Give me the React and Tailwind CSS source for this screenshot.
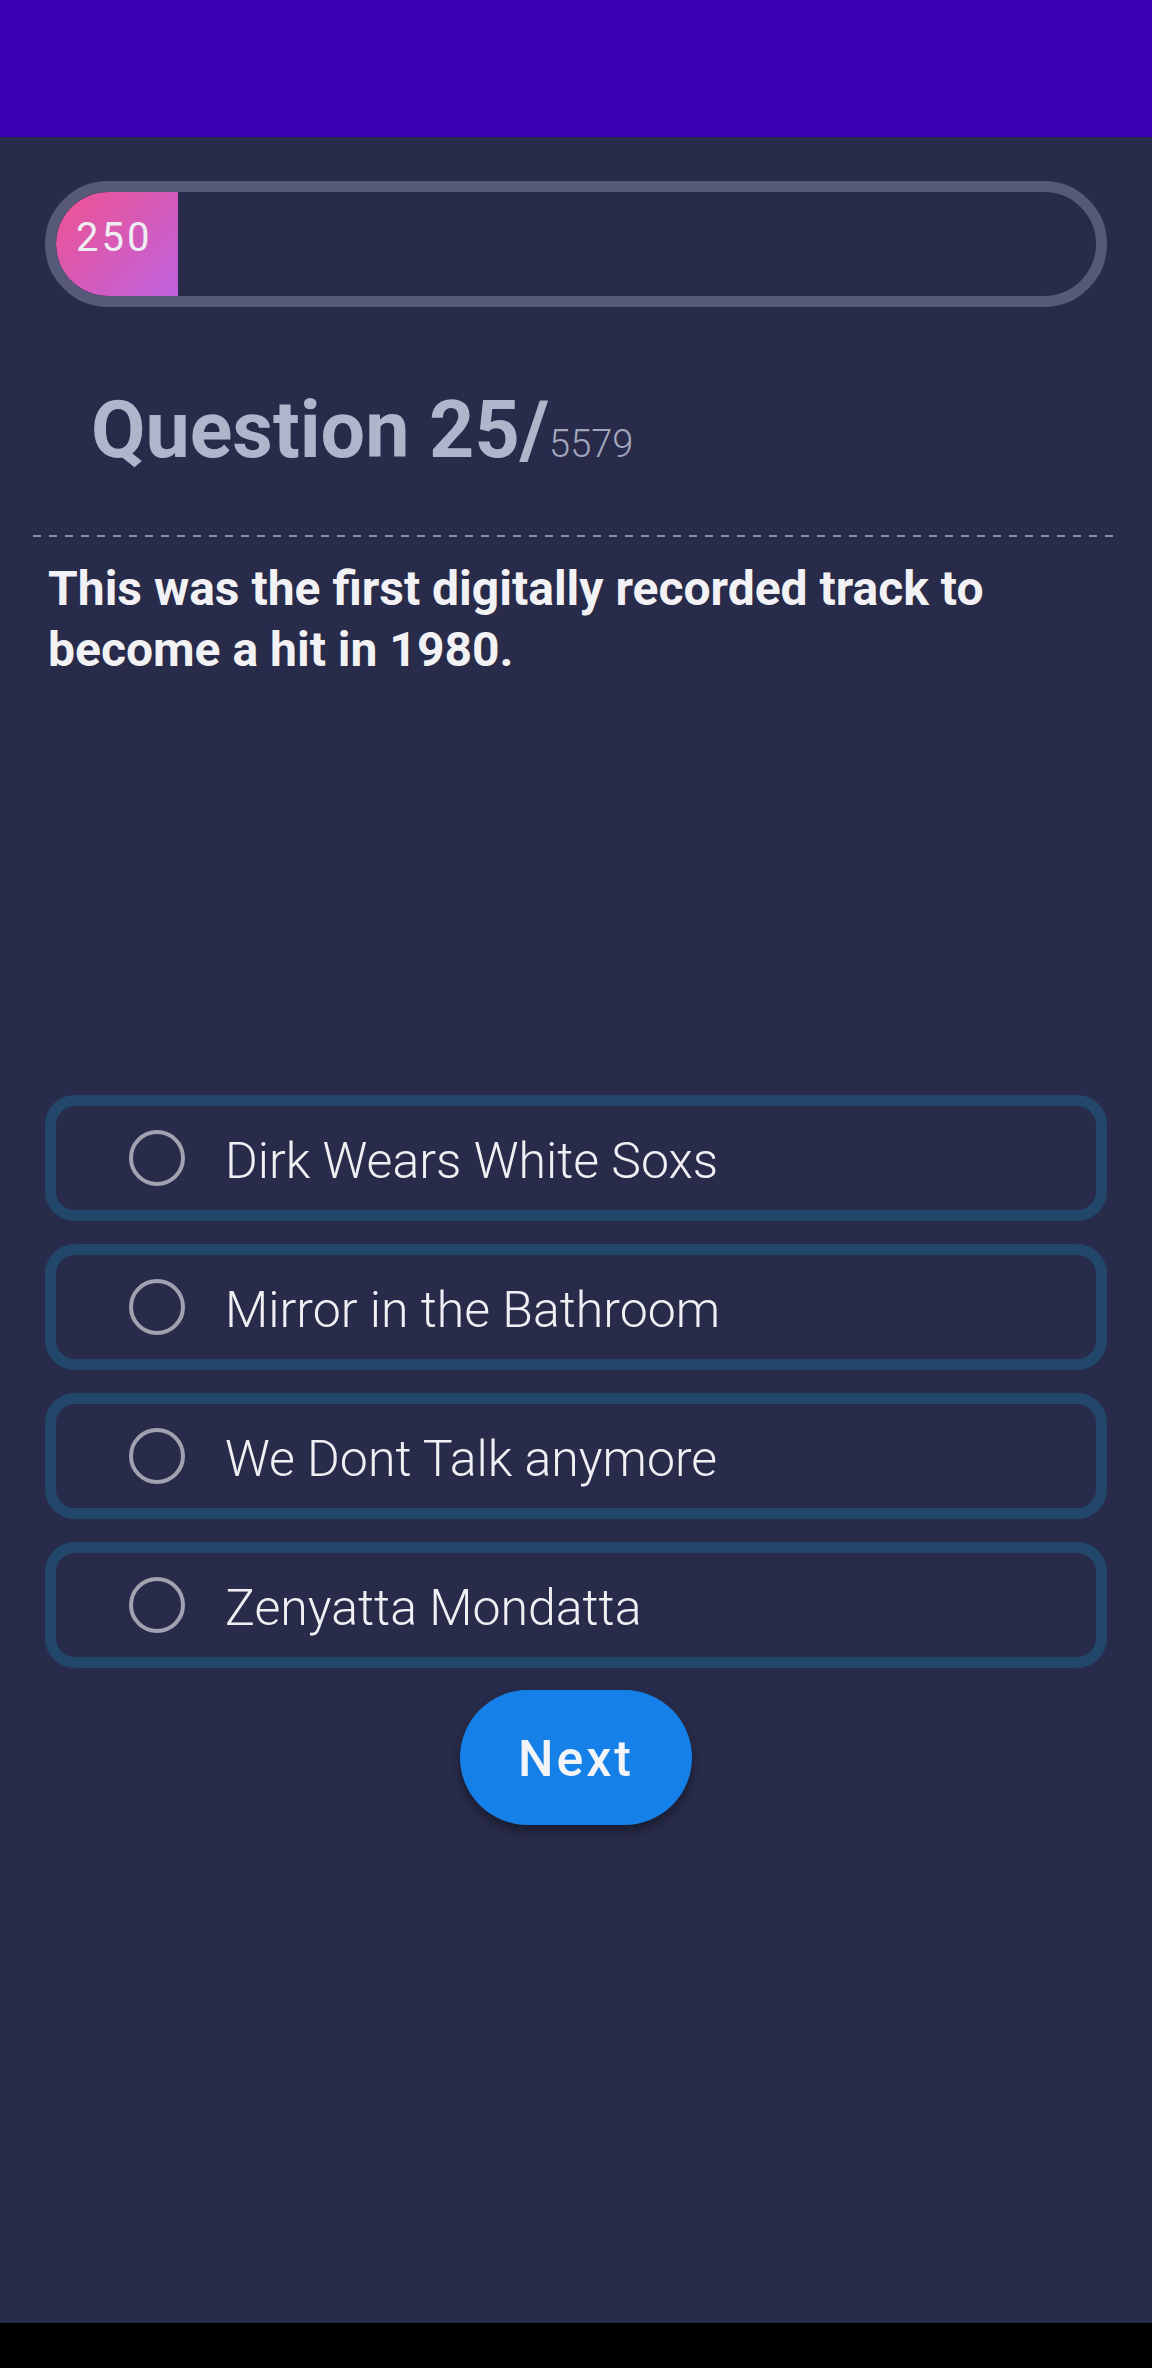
const options = [
  'Dirk Wears White Soxs',
  'Mirror in the Bathroom',
  'We Dont Talk anymore',
  'Zenyatta Mondatta',
];

const OptionRow = ({ label }) => (
  <div className="mx-[45px] h-[126px] rounded-[30px] border-[11px] border-[#22476a] flex items-center pl-[73px]">
    <span className="w-[56px] h-[56px] rounded-full border-[4px] border-[#a0a2b0] shrink-0" />
    <span className="ml-[40px] pt-[5px] text-[50px] font-light text-[#f0f0f4] leading-none">{label}</span>
  </div>
);

const App = () => {
  return (
    <div className="w-[1152px] h-[2368px] flex flex-col font-['Roboto',sans-serif]">
      <div className="h-[137px] bg-[#3a00b4] shrink-0" />

      <div className="flex-1 bg-[#282b49] flex flex-col">
        {/* score bar */}
        <div className="mt-[44px] mx-[45px] h-[126px] rounded-full border-[11px] border-[#565a78] overflow-hidden">
          <div className="w-[122px] h-full rounded-l-full bg-[linear-gradient(135deg,#ee5290,#bf62df)] flex items-center pl-[20px] pb-[12px]">
            <span className="text-[40px] tracking-[3px] text-[#eeeef2] leading-none">250</span>
          </div>
        </div>

        <div className="mt-[84px] pl-[91px] flex items-baseline leading-none">
          <span className="text-[79px] font-bold text-[#b1b5cc]">Question 25/</span>
          <span className="text-[38px] font-light text-[#a3a7be]">5579</span>
        </div>

        <div className="mt-[65px] ml-[33px] mr-[37px] h-[2px] bg-[repeating-linear-gradient(to_right,#8a8ca8_0_8px,transparent_8px_16px)]" />

        <p className="mt-[21px] px-[48px] text-[48px] leading-[61px] font-bold text-[#f2f2f4]">
          This was the first digitally recorded track to become a hit in 1980.
        </p>

        <div className="mt-[415px] flex flex-col gap-[23px]">
          {options.map((o) => (
            <OptionRow key={o} label={o} />
          ))}
        </div>

        <div className="mt-[22px] flex justify-center">
          <button className="w-[232px] h-[135px] rounded-full bg-[#1480e8] shadow-[0_6px_10px_rgba(0,0,0,0.35)] pt-[4px] text-[50px] font-medium tracking-[3px] text-[#f2f4f8]">
            Next
          </button>
        </div>
      </div>

      <div className="h-[45px] bg-black shrink-0" />
    </div>
  );
};

export default App;
